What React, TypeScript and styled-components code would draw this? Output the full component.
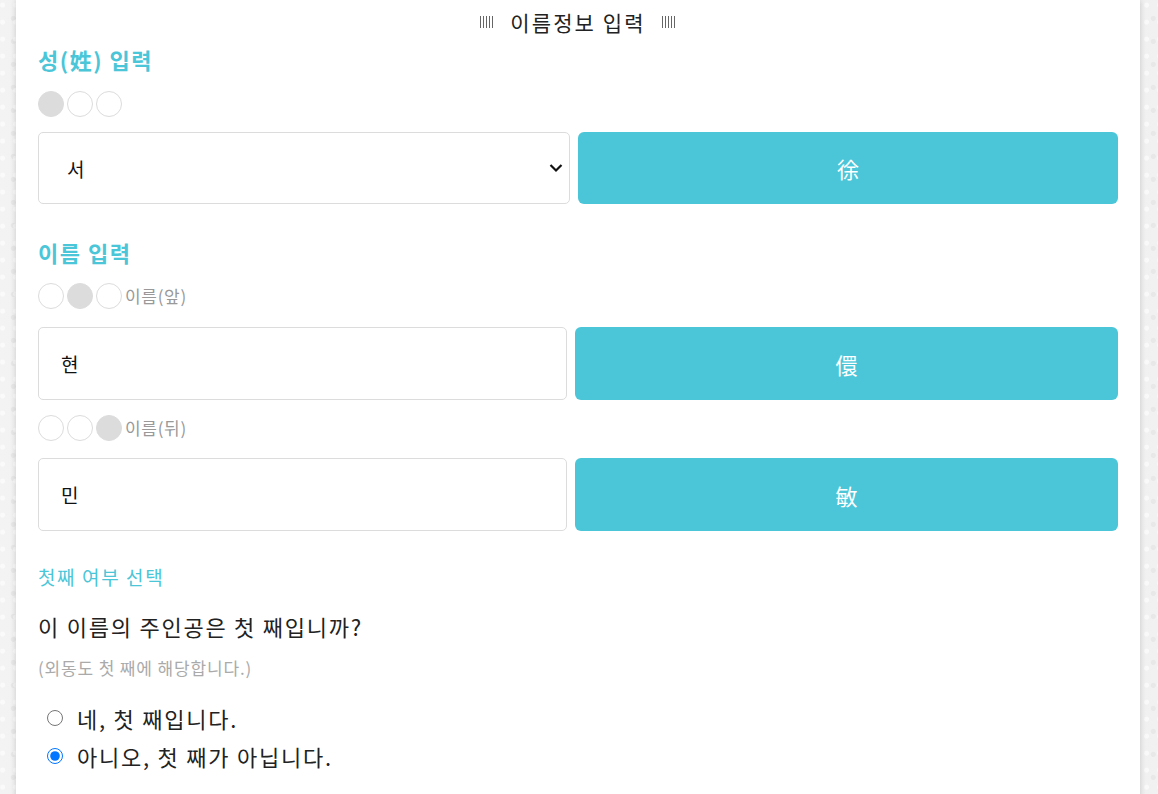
import React from "react";
import styled, { createGlobalStyle } from "styled-components";

const Global = createGlobalStyle`
  html, body {
    margin: 0;
    padding: 0;
  }
  body {
    background-color: #ececec;
    background-image:
      radial-gradient(circle at 20% 30%, rgba(255,255,255,0.6) 0 2px, transparent 3px),
      radial-gradient(circle at 70% 80%, rgba(0,0,0,0.04) 0 2px, transparent 3px),
      linear-gradient(90deg, #f3f3f3, #e6e6e6 50%, #f1f1f1);
    background-size: 13px 17px, 19px 23px, 100% 100%;
    font-family: "Noto Sans CJK KR", "Noto Sans", sans-serif;
    color: #222;
  }
  * { box-sizing: border-box; }
`;

const ACCENT = "#4ac6d8";

const Card = styled.main`
  width: 1124px;
  min-height: 794px;
  margin-left: 16px;
  background: #fff;
  box-shadow: 0 0 6px rgba(0, 0, 0, 0.18);
  padding: 8px 22px 30px;
`;

const Title = styled.h1`
  margin: 0;
  display: flex;
  justify-content: center;
  align-items: center;
  gap: 16px;
  font-size: 21px;
  font-weight: 400;
  line-height: 28px;
  letter-spacing: 0.1em;
  color: #222;
`;

const Deco = styled.span`
  display: inline-block;
  width: 14px;
  height: 12px;
  background: repeating-linear-gradient(
    to right,
    #666 0 1px,
    transparent 1px 3px
  );
`;

const SectionTitle = styled.h2<{ $mt: number }>`
  margin: ${(p) => p.$mt}px 0 0;
  font-size: 22px;
  font-weight: 600;
  line-height: 30px;
  letter-spacing: 0.07em;
  color: ${ACCENT};
`;

const DotsRow = styled.div<{ $mt: number }>`
  margin-top: ${(p) => p.$mt}px;
  display: flex;
  align-items: center;
  gap: 3px;
  height: 26px;
`;

const Dot = styled.span<{ $on: boolean }>`
  width: 26px;
  height: 26px;
  border-radius: 50%;
  border: 1px solid #dcdcdc;
  background: ${(p) => (p.$on ? "#dcdcdc" : "#fff")};
`;

const DotLabel = styled.span`
  font-size: 17px;
  color: #999;
  line-height: 26px;
  letter-spacing: 0.04em;
`;

const FieldRow = styled.div<{ $mt: number; $left: number; $h: number }>`
  margin-top: ${(p) => p.$mt}px;
  display: grid;
  grid-template-columns: ${(p) => p.$left}px 1fr;
  gap: 8px;
  height: ${(p) => p.$h}px;
`;

const SelectWrap = styled.div`
  position: relative;
  height: 100%;
`;

const Select = styled.select`
  appearance: none;
  width: 100%;
  height: 100%;
  border: 1px solid #dcdcdc;
  border-radius: 5px;
  background: #fff;
  padding: 0 40px 0 28px;
  font-family: inherit;
  font-size: 19px;
  color: #111;
  outline: none;
`;

const Chevron = styled.svg`
  position: absolute;
  right: 7px;
  top: 50%;
  transform: translateY(-50%);
  pointer-events: none;
`;

const TextInput = styled.input`
  width: 100%;
  height: 100%;
  border: 1px solid #dcdcdc;
  border-radius: 5px;
  padding: 0 22px;
  font-family: inherit;
  font-size: 19px;
  color: #111;
  outline: none;
`;

const HanjaButton = styled.button`
  height: 100%;
  border: none;
  border-radius: 6px;
  background: ${ACCENT};
  color: #fff;
  font-family: "Noto Sans CJK KR", "Noto Sans CJK SC", sans-serif;
  font-size: 22px;
  cursor: pointer;
`;

const SubTitle = styled.h3`
  margin: 33px 0 0;
  font-size: 19px;
  font-weight: 400;
  line-height: 26px;
  letter-spacing: 0.085em;
  color: ${ACCENT};
`;

const Question = styled.p`
  margin: 21px 0 0;
  font-size: 22px;
  line-height: 30px;
  letter-spacing: 0.08em;
  color: #222;
`;

const Note = styled.p`
  margin: 15px 0 0;
  font-size: 17px;
  line-height: 24px;
  letter-spacing: 0.05em;
  color: #aaa;
`;

const RadioList = styled.div`
  margin-top: 19px;
  display: flex;
  flex-direction: column;
`;

const RadioRow = styled.label`
  display: flex;
  align-items: center;
  gap: 14px;
  height: 38px;
  padding-left: 9px;
  font-size: 22px;
  letter-spacing: 0.08em;
  color: #222;
  cursor: pointer;
`;

const Radio = styled.input`
  width: 16px;
  height: 16px;
  margin: 0;
`;

const Dots = ({ on, label, mt }: { on: number; label?: string; mt: number }) => (
  <DotsRow $mt={mt}>
    {[0, 1, 2].map((i) => (
      <Dot key={i} $on={i === on} />
    ))}
    {label && <DotLabel>{label}</DotLabel>}
  </DotsRow>
);

export default function App() {
  return (
    <>
      <Global />
      <Card>
        <Title>
          <Deco />
          이름정보 입력
          <Deco />
        </Title>

        <SectionTitle $mt={8}>성(姓) 입력</SectionTitle>
        <Dots on={0} mt={17} />
        <FieldRow $mt={15} $left={532} $h={72}>
          <SelectWrap>
            <Select defaultValue="서">
              <option value="서">서</option>
              <option value="김">김</option>
              <option value="이">이</option>
            </Select>
            <Chevron width="14" height="9" viewBox="0 0 14 9">
              <path d="M1.5 1.5 L7 7 L12.5 1.5" fill="none" stroke="#111" strokeWidth="2.2" />
            </Chevron>
          </SelectWrap>
          <HanjaButton>徐</HanjaButton>
        </FieldRow>

        <SectionTitle $mt={33}>이름 입력</SectionTitle>
        <Dots on={1} label="이름(앞)" mt={16} />
        <FieldRow $mt={18} $left={529} $h={73}>
          <TextInput defaultValue="현" />
          <HanjaButton>儇</HanjaButton>
        </FieldRow>
        <Dots on={2} label="이름(뒤)" mt={15} />
        <FieldRow $mt={17} $left={529} $h={73}>
          <TextInput defaultValue="민" />
          <HanjaButton>敏</HanjaButton>
        </FieldRow>

        <SubTitle>첫째 여부 선택</SubTitle>
        <Question>이 이름의 주인공은 첫 째입니까?</Question>
        <Note>(외동도 첫 째에 해당합니다.)</Note>
        <RadioList>
          <RadioRow>
            <Radio type="radio" name="first" value="yes" />
            네, 첫 째입니다.
          </RadioRow>
          <RadioRow>
            <Radio type="radio" name="first" value="no" defaultChecked />
            아니오, 첫 째가 아닙니다.
          </RadioRow>
        </RadioList>
      </Card>
    </>
  );
}
